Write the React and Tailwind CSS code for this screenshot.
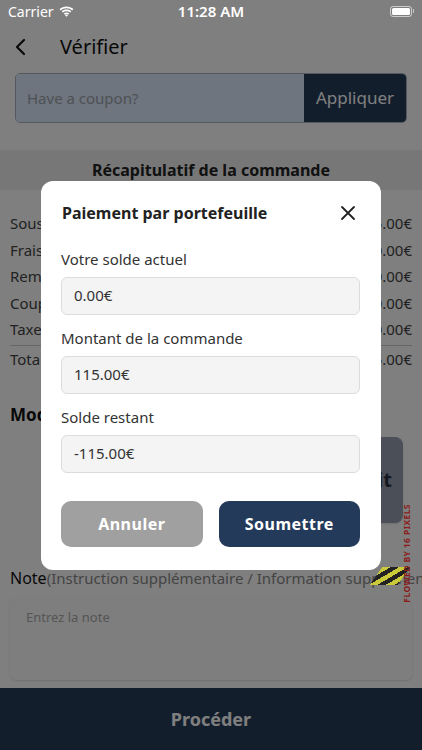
import React from 'react';

const rows = [
  ['Sous-total', '115.00€'],
  ['Frais de livraison', '0.00€'],
  ['Remise', '0.00€'],
  ['Coupon', '0.00€'],
  ['Taxe', '0.00€'],
];

const StatusBar = () => (
  <div className="relative z-30 flex h-[22px] items-center justify-between px-[8px] text-white text-[14px]">
    <div className="flex items-center gap-[5px]">
      <span>Carrier</span>
      <svg width="15" height="11" viewBox="0 0 15 11" fill="white">
        <path d="M7.5 2.2c2.2 0 4.2.8 5.7 2.2l1.2-1.3C12.6 1.4 10.2.4 7.5.4S2.4 1.4.6 3.1l1.2 1.3c1.5-1.4 3.5-2.2 5.7-2.2z" />
        <path d="M7.5 5.2c1.4 0 2.6.5 3.6 1.3l1.2-1.3C11 4 9.3 3.4 7.5 3.4S4 4 2.7 5.2l1.2 1.3c1-.8 2.2-1.3 3.6-1.3z" />
        <path d="M7.5 8.2c.6 0 1.1.2 1.5.5L10.2 7.4c-.7-.6-1.7-1-2.7-1s-2 .4-2.7 1L6 8.7c.4-.3.9-.5 1.5-.5z" />
        <path d="M7.5 10.8L9 9.3c-.4-.3-.9-.5-1.5-.5s-1.1.2-1.5.5z" />
      </svg>
    </div>
    <span className="absolute left-1/2 -translate-x-1/2 text-[15px] font-semibold">11:28 AM</span>
    <div className="flex items-center">
      <div className="h-[11px] w-[22px] rounded-[3px] border border-white/60 p-[1px]">
        <div className="h-full w-full rounded-[1.5px] bg-white" />
      </div>
      <div className="ml-[1px] h-[4px] w-[1.5px] rounded-r bg-white/60" />
    </div>
  </div>
);

const Field = ({ label, value, first }) => (
  <div className={first ? 'mt-[24px]' : 'mt-[13px]'}>
    <div className="text-[15px] leading-[20px] text-[#333]">{label}</div>
    <div className="mt-[8px] flex h-[38px] items-center rounded-[6px] border border-[#dcdcdc] bg-[#f4f4f4] pl-[12px] text-[15px] text-[#333]">
      {value}
    </div>
  </div>
);

export default function App() {
  return (
    <div className="relative h-[750px] w-[422px] overflow-hidden bg-white font-['Noto_Sans',sans-serif]">
      <StatusBar />

      {/* page under the dialog */}
      <div className="flex h-[50px] items-center px-[14px]">
        <svg width="14" height="18" viewBox="0 0 14 18" fill="none" stroke="#111" strokeWidth="2.2" strokeLinecap="round" strokeLinejoin="round">
          <path d="M10 2L3 9l7 7" />
        </svg>
        <span className="ml-[32px] text-[20px] text-[#111]">Vérifier</span>
      </div>

      <div className="mx-[15px] mt-[1px] flex h-[50px] overflow-hidden rounded-[5px] border border-[#a9b3bf]">
        <div className="flex flex-1 items-center bg-[#deeafc] pl-[11px] text-[15px] text-[#9aa3ad]">Have a coupon?</div>
        <div className="flex w-[102px] items-center justify-center bg-[#263c5a] text-[17px] text-white">Appliquer</div>
      </div>

      <div className="mt-[27px] flex h-[40px] items-center justify-center bg-[#eeeeee] text-[16px] font-bold text-[#222]">
        Récapitulatif de la commande
      </div>

      <div className="px-[10px] pt-[20px] text-[15px] text-[#444]">
        {rows.map(([l, v]) => (
          <div key={l} className="flex h-[26.5px] items-center justify-between">
            <span>{l}</span>
            <span>{v}</span>
          </div>
        ))}
        <div className="mt-[2px] border-t border-[#ccc]" />
        <div className="flex h-[28px] items-center justify-between">
          <span>Total</span>
          <span>115.00€</span>
        </div>
        <div className="mt-[28px] text-[17px] font-bold text-[#111]">Mode de paiement</div>
        <div className="ml-[38px] mr-[9px] mt-[10px] grid grid-cols-2 gap-[18px]">
          <div className="h-[86px] rounded-[8px] bg-[#f1f1f1] shadow" />
          <div className="flex h-[86px] items-center justify-end rounded-[8px] bg-[#96a0b0] pr-[11px] text-[20px] font-bold text-[#2a3240] shadow">
            Crédit
          </div>
        </div>
        <div className="mt-[43px] flex items-baseline">
          <span className="text-[16px] text-[#111]">Note</span>
          <span className="whitespace-nowrap text-[15px] text-[#888]">(Instruction supplémentaire / Information supplémentaire)</span>
        </div>
        <div className="mt-[8px] h-[82px] rounded-[6px] bg-[#fdfdfd] px-[16px] pt-[10px] text-[13px] text-[#aaa] shadow-sm">
          Entrez la note
        </div>
      </div>

      <div className="absolute bottom-0 left-0 flex h-[62px] w-full items-center justify-center bg-[#263c5a] text-[18px] font-bold text-[#fff]">
        Procéder
      </div>

      {/* dim overlay */}
      <div className="absolute inset-0 z-10 bg-black/50" />

      {/* watermark */}
      <div className="absolute left-[376px] top-[567px] z-20 h-[18px] w-[28px] -skew-x-[35deg] bg-[repeating-linear-gradient(135deg,#c9c93a_0_6px,#222_6px_12px)]" />
      <div className="absolute left-[401px] top-[508px] z-20 flex h-[90px] w-[12px] items-center justify-center">
        <span className="-rotate-90 whitespace-nowrap text-[8.5px] font-bold tracking-[0.4px] text-[#8b1c1c]">FLOWED BY 16 PIXELS</span>
      </div>

      {/* dialog */}
      <div className="absolute inset-0 z-20 flex items-center justify-center">
        <div className="w-[340px] rounded-[12px] bg-white pb-[23px] pl-[20px] pr-[21px] pt-[20px]">
          <div className="flex h-[24px] items-center justify-between">
            <span className="pl-[1px] text-[16px] font-bold text-[#222]">Paiement par portefeuille</span>
            <svg width="16" height="16" viewBox="0 0 16 16" stroke="#222" strokeWidth="1.8" strokeLinecap="round" className="mr-[4px]">
              <path d="M2 2l12 12M14 2L2 14" />
            </svg>
          </div>
          <Field first label="Votre solde actuel" value="0.00€" />
          <Field label="Montant de la commande" value="115.00€" />
          <Field label="Solde restant" value="-115.00€" />
          <div className="mt-[28px] grid grid-cols-2 gap-[16px]">
            <button className="h-[46px] rounded-[10px] bg-[#a0a0a0] text-[16px] font-bold tracking-[0.5px] text-white">Annuler</button>
            <button className="h-[46px] rounded-[10px] bg-[#243a5a] text-[16px] font-bold tracking-[0.5px] text-white">Soumettre</button>
          </div>
        </div>
      </div>
    </div>
  );
}
